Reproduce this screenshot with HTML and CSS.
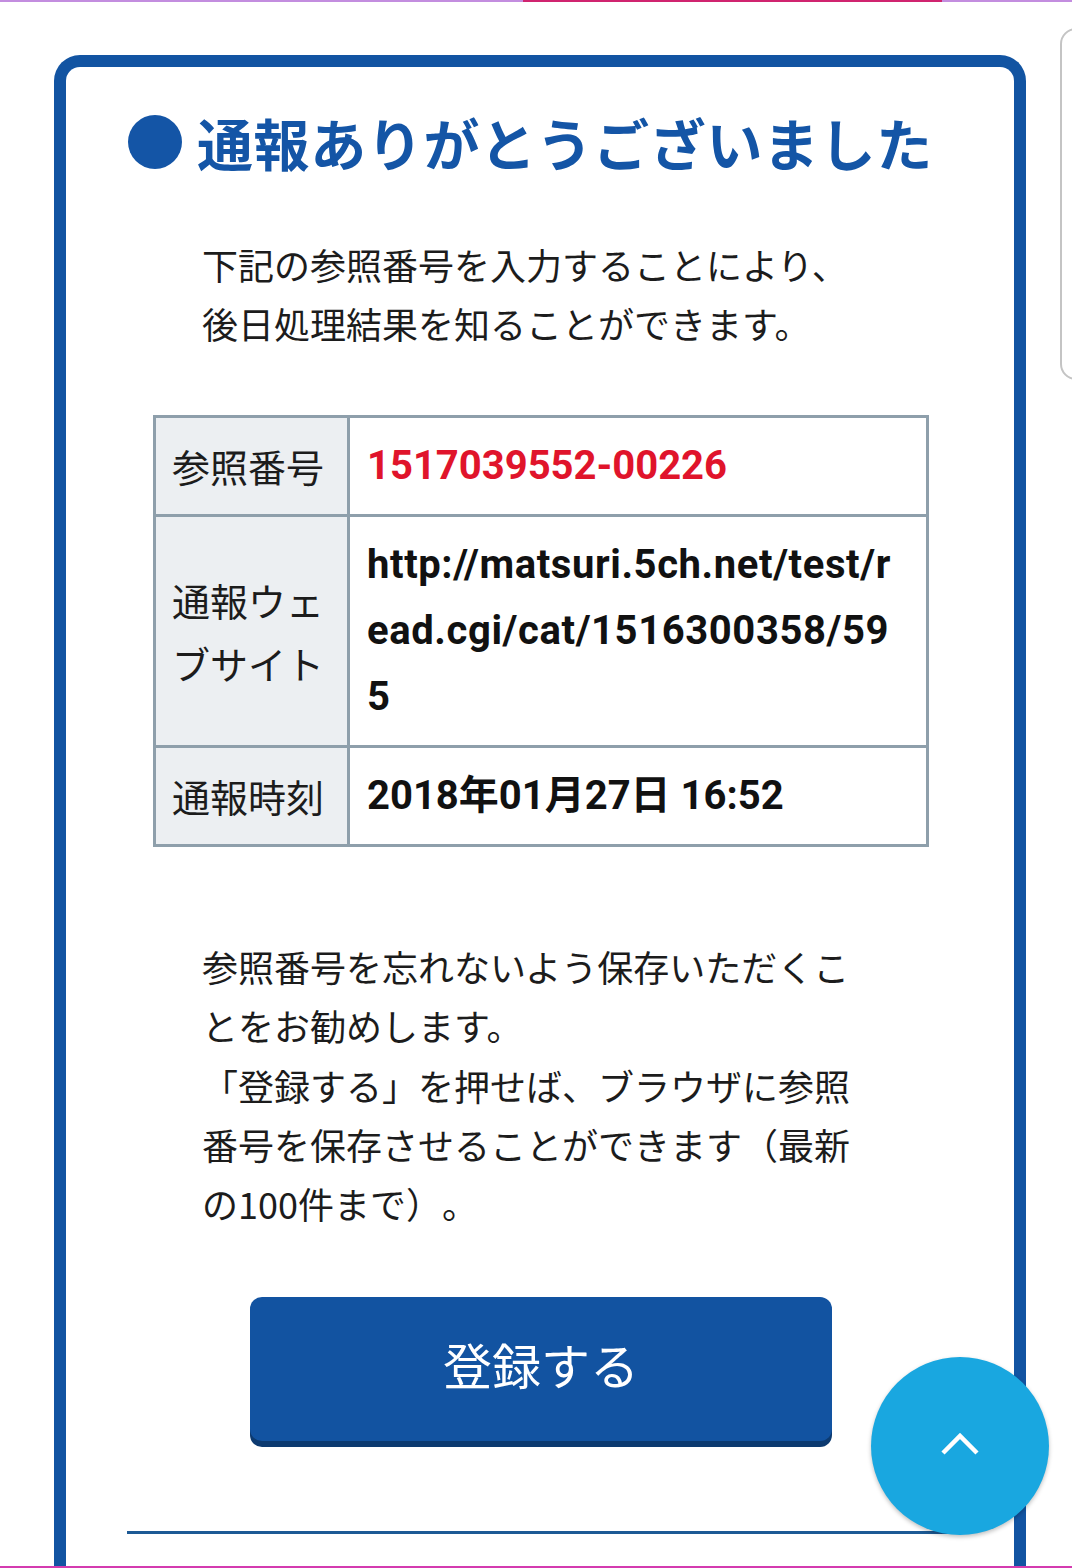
FILE: index.html
```html
<!DOCTYPE html>
<html lang="ja">
<head>
  <meta charset="UTF-8" />
  <meta name="viewport" content="width=device-width, initial-scale=1.0" />
  <title>通報完了</title>
  <link rel="stylesheet" href="styles.css">
</head>
<body>
  <div class="topbar"><span class="topbar-mark"></span></div>

  <div class="card">
    <h1 class="title"><span class="dot"></span>通報ありがとうございました</h1>

    <p class="note">下記の参照番号を入力することにより、後日処理結果を知ることができます。</p>

    <table class="info">
      <tr>
        <th>参照番号</th>
        <td class="ref">1517039552-00226</td>
      </tr>
      <tr>
        <th>通報ウェブサイト</th>
        <td class="url">http://matsuri.5ch.net/test/read.cgi/cat/1516300358/595</td>
      </tr>
      <tr>
        <th>通報時刻</th>
        <td>2018年01月27日 16:52</td>
      </tr>
    </table>

    <p class="note note-bottom">参照番号を忘れないよう保存いただくことをお勧めします。<br>「登録する」を押せば、ブラウザに参照番号を保存させることができます（最新の100件まで）。</p>

    <button class="save" id="save">登録する</button>

    <hr class="line">
  </div>

  <div class="side-tab"></div>

  <button class="to-top" id="toTop">
    <svg width="40" height="26" viewBox="0 0 40 26">
      <path d="M3 22 L20 5 L37 22" fill="none" stroke="#fff" stroke-width="4.5" />
    </svg>
  </button>

  <div class="bottombar"></div>

  <script>
    document.getElementById("toTop").addEventListener("click", function () {
      window.scrollTo({ top: 0, behavior: "smooth" });
    });
  </script>
</body>
</html>
```

FILE: styles.css
```css
body {
  margin: 0;
  background: #fff;
  font-family: 'Roboto', 'Noto Sans CJK JP', sans-serif;
  color: #1a1a1a;
  line-height: 1.65;
  overflow: hidden;
  height: 1568px;
  text-spacing-trim: space-all;
}

.topbar {
  height: 2px;
  background: #c38ddf;
  display: flex;
}

.topbar-mark {
  margin-left: 523px;
  width: 419px;
  background: #d0246f;
}

.card {
  margin: 53px 46px 0 54px;
  border: 12px solid #1254a2;
  border-bottom: none;
  border-radius: 26px 26px 0 0;
  padding: 29px 59px 80px 61px;
}

.title {
  margin: 0;
  display: flex;
  align-items: center;
  font-size: 56px;
  line-height: 92px;
  font-weight: 700;
  letter-spacing: 0.6px;
  color: #1455a6;
  font-family: 'Noto Sans CJK JP', sans-serif;
  white-space: nowrap;
}

.dot {
  width: 54px;
  height: 54px;
  border-radius: 50%;
  background: #1455a6;
  margin: 0 15px 0 1px;
  flex-shrink: 0;
}

.note {
  margin: 47px 0 0 75px;
  width: 660px;
  font-size: 36px;
  line-height: 59.4px;
  font-family: 'Noto Sans CJK JP', sans-serif;
  color: #1c1c1c;
}

.info {
  margin: 61px auto 0;
  width: 776px;
  border-collapse: collapse;
  border: 3px solid #8e9fab;
}

.info th,
.info td {
  border: 3px solid #8e9fab;
  padding: 15px 12px 15px 17px;
  text-align: left;
  vertical-align: middle;
}

.info th {
  width: 161px;
  padding: 15px 14px 15px 16px;
  background: #eceff2;
  font-family: 'Noto Sans CJK JP', sans-serif;
  font-size: 38px;
  font-weight: 400;
  line-height: 63px;
  color: #1c1c1c;
}

.info td {
  font-family: 'Roboto', 'Noto Sans CJK JP', sans-serif;
  font-size: 40px;
  font-weight: 700;
  line-height: 66px;
  color: #111;
}

.info td.ref {
  color: #e0142b;
}

.info td.url {
  word-break: break-all;
  letter-spacing: 0.6px;
  padding-right: 29px;
}

.note-bottom {
  margin-top: 90px;
}

.save {
  display: block;
  margin: 63px auto 0;
  padding: 0 0 10px;
  width: 582px;
  height: 144px;
  border: none;
  border-radius: 12px;
  background: #1253a1;
  box-shadow: 0 6px 0 #0c3a70;
  color: #fff;
  font-family: 'Noto Sans CJK JP', sans-serif;
  font-size: 49px;
  cursor: pointer;
}

.line {
  margin: 90px 0 0;
  border: none;
  height: 3px;
  background: #1d5a95;
}

.side-tab {
  position: fixed;
  top: 28px;
  right: -20px;
  width: 28px;
  height: 348px;
  border: 2px solid #c4c4c4;
  border-radius: 16px;
  background: #fff;
}

.to-top {
  position: fixed;
  right: 23px;
  bottom: 33px;
  width: 178px;
  height: 178px;
  border: none;
  border-radius: 50%;
  background: #19a7e0;
  box-shadow: 0 2px 4px rgba(0, 0, 0, 0.25);
  display: flex;
  align-items: center;
  justify-content: center;
  cursor: pointer;
}

.to-top svg {
  margin-top: -4px;
}

.bottombar {
  position: fixed;
  left: 0;
  right: 0;
  bottom: 0;
  height: 2px;
  background: #d43bb0;
}
```
